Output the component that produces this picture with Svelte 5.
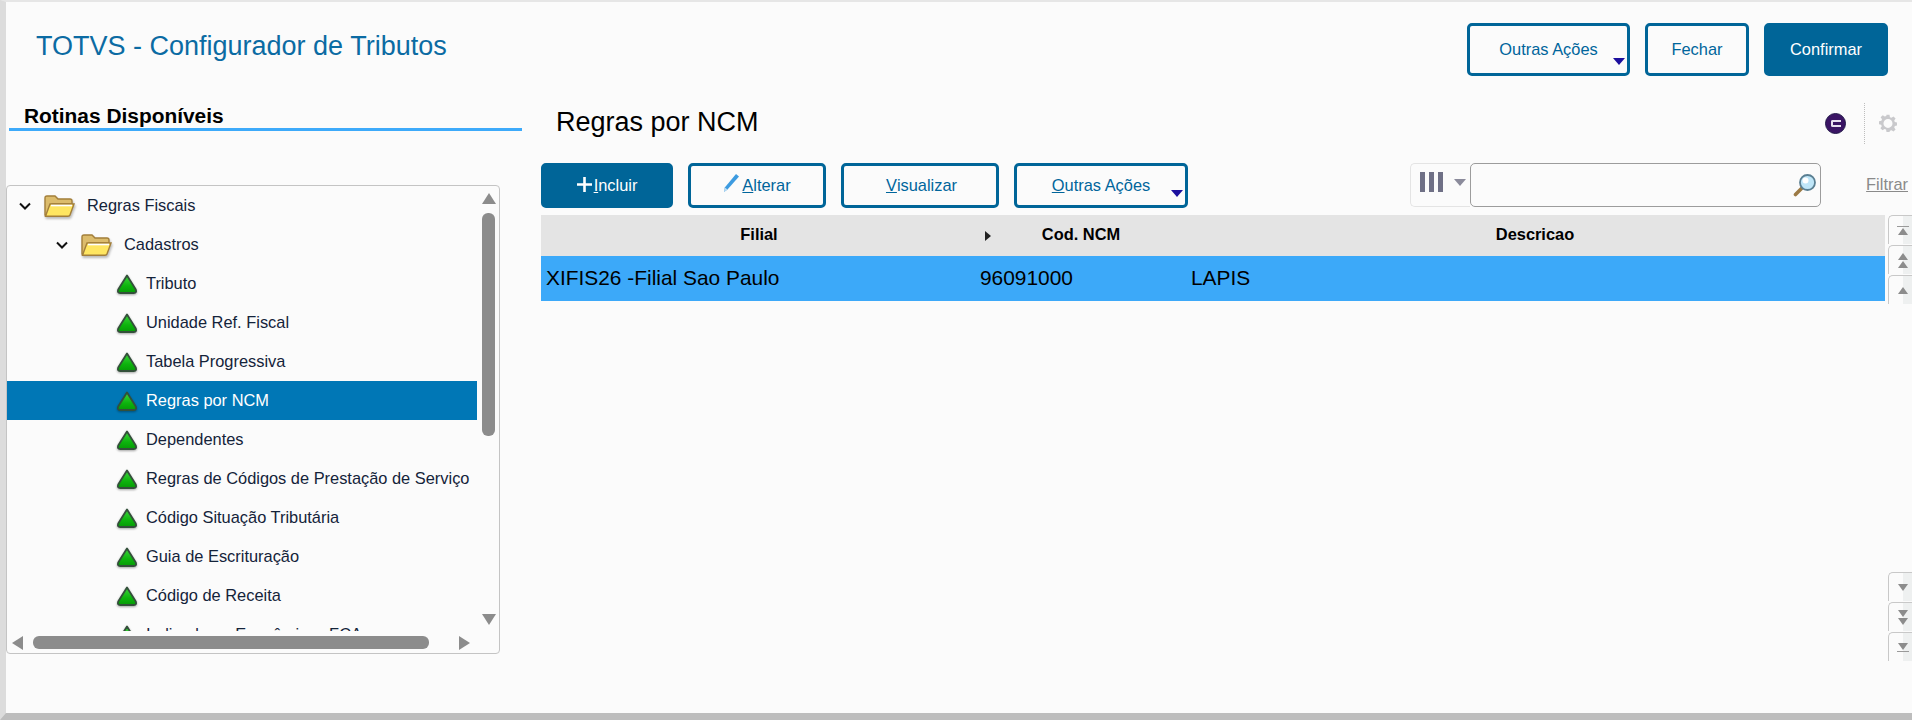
<script>
  const routines = [
    'Tributo',
    'Unidade Ref. Fiscal',
    'Tabela Progressiva',
    'Regras por NCM',
    'Dependentes',
    'Regras de Códigos de Prestação de Serviço',
    'Código Situação Tributária',
    'Guia de Escrituração',
    'Código de Receita',
    'Indicadores Econômicos FCA'
  ];
  const folders = [
    { label: 'Regras Fiscais', cls: 'lvl0' },
    { label: 'Cadastros', cls: 'lvl1' }
  ];
  const selected = 'Regras por NCM';
</script>

<div class="page">
  <header class="topbar">
    <h1>TOTVS - Configurador de Tributos</h1>
    <div class="actions">
      <button class="btn big more">Outras Ações<span class="caret"></span></button>
      <button class="btn big close">Fechar</button>
      <button class="btn big primary confirm">Confirmar</button>
    </div>
  </header>

  <main class="main">
    <aside class="left">
      <h2>Rotinas Disponíveis</h2>
      <div class="tree">
        <svg class="defs" width="0" height="0">
          <defs>
            <linearGradient id="triFill" x1="0" y1="0" x2="0" y2="1">
              <stop offset="0" stop-color="#3fd43f"/>
              <stop offset="0.6" stop-color="#0db40d"/>
              <stop offset="1" stop-color="#069a06"/>
            </linearGradient>
          </defs>
        </svg>
        <div class="tree-list">
          {#each folders as f}
            <div class="row {f.cls}">
              <svg class="chevron" viewBox="0 0 12 8"><path d="M1 1.5 6 6.5 11 1.5" fill="none" stroke="#111" stroke-width="2"/></svg>
              <svg class="folder" viewBox="0 0 32 24">
                <path d="M2 21V4q0-2 2-2h8l3 3h12q2 0 2 2v3H9L5 21z" fill="#dcbc6c" stroke="#a37f3a" stroke-width="1.4"/>
                <path d="M7 10h24l-4 11q-.4 1.200-2 1.200H2.500z" fill="#ffe661" stroke="#a37f3a" stroke-width="1.4"/>
                <path d="M8 11.500h21" stroke="#fff" stroke-width="1.600"/>
              </svg>
              <span>{f.label}</span>
            </div>
          {/each}
          {#each routines as r}
            <div class="row leaf" class:active={r === selected}>
              <svg class="tri" viewBox="0 0 22 22">
                <path d="M11 2.500 19.800 16.500q1.200 3.500-2 3.500H4.200q-3.200 0-2-3.500z" fill="url(#triFill)" stroke="#33503a" stroke-width="1.800" stroke-linejoin="round"/>
              </svg>
              <span>{r}</span>
            </div>
          {/each}
        </div>
        <div class="vbar">
          <span class="arrow up"></span>
          <span class="thumb-v"></span>
          <span class="arrow down"></span>
        </div>
        <div class="hbar">
          <span class="arrow left-a"></span>
          <span class="thumb-h"></span>
          <span class="arrow right-a"></span>
        </div>
      </div>
    </aside>

    <section class="content">
      <div class="head">
        <h3>Regras por NCM</h3>
        <div class="head-icons">
          <span class="badge"><span></span></span>
          <span class="dots"></span>
          <svg class="gear" viewBox="0 0 24 24">
            <path fill="#c9c9cc" fill-rule="evenodd" d="M10 1h4l.6 3.200 2 .8L19.300 3.200l2.800 2.800-1.800 2.700.8 2 3.200.6v4l-3.200.6-.8 2 1.800 2.700-2.800 2.800-2.700-1.800-2 .8L14 24h-4l-.6-3.200-2-.8-2.700 1.800-2.800-2.800 1.800-2.700-.8-2L0 13.700v-4l3.200-.6.8-2L2.200 4.400 5 1.600l2.700 1.800 2-.8zM12 6.500a6 6 0 1 0 0 12 6 6 0 0 0 0-12z"/>
          </svg>
        </div>
      </div>

      <div class="toolbar">
        <button class="btn small primary include">
          <svg class="plus" viewBox="0 0 15 15"><path d="M7.500 0v15M0 7.500h15" stroke="#fff" stroke-width="2.600"/></svg>
          <span><u>I</u>ncluir</span>
        </button>
        <button class="btn small edit">
          <svg class="pencil" viewBox="0 0 16 18"><path d="M13 0l3 2.500L4.500 15.500 1 18l.8-4.500z" fill="#3d9be0"/><path d="M1.800 13.500 1 18l3.500-2.500z" fill="#bcdcf2"/></svg>
          <span><u>A</u>lterar</span>
        </button>
        <button class="btn small view"><u>V</u>isualizar</button>
        <button class="btn small more2"><span><u>O</u>utras Ações</span><span class="caret"></span></button>

        <div class="search-group">
          <div class="cols">
            <span class="bars"><i></i><i></i><i></i></span>
            <span class="cols-caret"></span>
          </div>
          <div class="search">
            <input type="text" />
            <svg class="lens" viewBox="0 0 24 24">
              <path d="M9 15 2.500 21.500" stroke="#9c7a45" stroke-width="3.600" stroke-linecap="round"/>
              <circle cx="14.500" cy="9.500" r="7.500" fill="#bfe6f8" stroke="#5a7f92" stroke-width="1.800"/>
              <circle cx="12.500" cy="7.500" r="3" fill="#fff"/>
            </svg>
          </div>
          <a class="filter" href="#top">Filtrar</a>
        </div>
      </div>

      <div class="grid-wrap">
        <div class="table">
          <div class="thead">
            <div>Filial</div>
            <div class="ncm-head"><span class="mark"></span>Cod. NCM</div>
            <div>Descricao</div>
          </div>
          <div class="tr">
            <div>XIFIS26 -Filial Sao Paulo</div>
            <div>96091000</div>
            <div>LAPIS</div>
          </div>
        </div>
        <div class="pager">
          <div class="pager-group">
            <div class="pg"><span class="bar-line"></span><span class="t-up"></span></div>
            <div class="pg"><span class="t-up"></span><span class="t-up"></span></div>
            <div class="pg"><span class="t-up"></span></div>
          </div>
          <div class="pager-group">
            <div class="pg"><span class="t-down"></span></div>
            <div class="pg"><span class="t-down"></span><span class="t-down"></span></div>
            <div class="pg"><span class="t-down"></span><span class="bar-line"></span></div>
          </div>
        </div>
      </div>
    </section>
  </main>
</div>

<style>
  :global(body) {
    margin: 0;
    font-family: "Liberation Sans", Arial, sans-serif;
  }

  .page {
    box-sizing: border-box;
    width: 1912px;
    height: 720px;
    background: #fbfbfb;
    border-top: 2px solid #e6e6e6;
    border-left: 6px solid #dcdcdc;
    border-bottom: 7px solid #bdbdbd;
    display: flex;
    flex-direction: column;
    overflow: hidden;
  }

  .topbar {
    height: 82px;
    flex: none;
    box-sizing: border-box;
    padding: 21px 24px 0 30px;
    display: flex;
    justify-content: space-between;
    align-items: flex-start;
  }

  h1 {
    margin: 8px 0 0;
    font-size: 27px;
    line-height: 30px;
    font-weight: 400;
    color: #0b6ba3;
  }

  .actions {
    display: flex;
    gap: 15px;
  }

  .btn {
    box-sizing: border-box;
    position: relative;
    border: 3px solid #006598;
    border-radius: 5px;
    background: #fbfbfb;
    color: #00659b;
    font-family: inherit;
    font-size: 16.4px;
    padding: 0;
    display: flex;
    align-items: center;
    justify-content: center;
  }

  .btn.primary {
    background: #006598;
    color: #fff;
  }

  .big {
    height: 53px;
  }

  .more {
    width: 163px;
  }
  .close {
    width: 104px;
  }
  .confirm {
    width: 124px;
  }

  .caret {
    position: absolute;
    right: 2px;
    bottom: 8px;
    border-left: 6px solid transparent;
    border-right: 6px solid transparent;
    border-top: 7px solid #1c0f9e;
  }

  .main {
    flex: 1;
    display: flex;
    min-height: 0;
  }

  .left {
    width: 535px;
    flex: none;
  }

  h2 {
    box-sizing: border-box;
    margin: 20px 0 0 3px;
    width: 513px;
    height: 27px;
    padding-left: 15px;
    font-size: 20.9px;
    line-height: 24px;
    font-weight: 700;
    color: #000;
    border-bottom: 3px solid #3daafa;
  }

  .tree {
    box-sizing: border-box;
    margin: 54px 0 0;
    width: 494px;
    height: 469px;
    border: 1px solid #c4c4c4;
    border-radius: 4px;
    display: grid;
    grid-template-columns: 470px 1fr;
    grid-template-rows: 445px 1fr;
  }

  .defs {
    position: absolute;
  }

  .tree-list {
    grid-column: 1;
    grid-row: 1;
    overflow: hidden;
    white-space: nowrap;
  }

  .row {
    height: 39px;
    display: flex;
    align-items: center;
    font-size: 16.4px;
    color: #14233a;
  }

  .lvl0 {
    padding-left: 12px;
  }
  .lvl1 {
    padding-left: 49px;
  }

  .chevron {
    width: 12px;
    height: 8px;
    margin-right: 12px;
  }

  .folder {
    width: 32px;
    height: 24px;
    margin-right: 12px;
    filter: drop-shadow(1px 2px 1px rgba(0, 0, 0, 0.25));
  }

  .leaf {
    padding-left: 109px;
  }

  .tri {
    width: 22px;
    height: 22px;
    margin-right: 8px;
    filter: drop-shadow(0 1px 1px rgba(0, 0, 0, 0.35));
  }

  .active {
    background: #0077b6;
    color: #fff;
  }

  .vbar {
    grid-column: 2;
    grid-row: 1 / 3;
    padding: 7px 0 28px 5px;
    display: flex;
    flex-direction: column;
    align-items: flex-start;
  }

  .arrow {
    display: block;
    width: 0;
    height: 0;
  }

  .up {
    border-left: 7px solid transparent;
    border-right: 7px solid transparent;
    border-bottom: 11px solid #8c8c8c;
  }

  .down {
    margin-top: auto;
    border-left: 7px solid transparent;
    border-right: 7px solid transparent;
    border-top: 11px solid #8c8c8c;
  }

  .thumb-v {
    margin-top: 9px;
    width: 13px;
    height: 223px;
    border-radius: 6px;
    background: #8c8c8c;
  }

  .hbar {
    grid-column: 1;
    grid-row: 2;
    padding: 5px 0 0 5px;
    display: flex;
    align-items: flex-start;
  }

  .left-a {
    border-top: 7px solid transparent;
    border-bottom: 7px solid transparent;
    border-right: 11px solid #8c8c8c;
  }

  .thumb-h {
    margin-left: 10px;
    width: 396px;
    height: 13px;
    border-radius: 6px;
    background: #8c8c8c;
  }

  .right-a {
    margin-left: 30px;
    border-top: 7px solid transparent;
    border-bottom: 7px solid transparent;
    border-left: 11px solid #8c8c8c;
  }

  .content {
    flex: 1;
    min-width: 0;
  }

  .head {
    height: 79px;
    box-sizing: border-box;
    padding: 0 15px 3px 15px;
    display: flex;
    justify-content: space-between;
    align-items: center;
  }

  h3 {
    margin: 0;
    font-size: 27px;
    font-weight: 400;
    color: #000;
  }

  .head-icons {
    display: flex;
    align-items: center;
    margin-top: 2px;
  }

  .badge {
    box-sizing: border-box;
    width: 21px;
    height: 21px;
    border-radius: 50%;
    background: #3a1464;
    border: 1px solid #241a4a;
    display: flex;
    align-items: center;
    justify-content: center;
  }

  .badge span {
    box-sizing: border-box;
    width: 10px;
    height: 7px;
    border: 2px solid #e8e0f0;
    border-right: none;
    border-radius: 2px 0 0 2px;
  }

  .dots {
    margin-left: 18px;
    height: 41px;
    border-left: 1px dotted #bdbdbd;
  }

  .gear {
    margin-left: 14px;
    width: 18px;
    height: 18px;
  }

  .toolbar {
    height: 45px;
    display: flex;
    gap: 15px;
  }

  .small {
    height: 45px;
  }

  .include {
    width: 132px;
    gap: 2px;
  }

  .plus {
    width: 15px;
    height: 15px;
    margin-top: -3px;
  }

  .edit {
    width: 138px;
    gap: 3px;
  }

  .pencil {
    width: 16px;
    height: 18px;
    margin-top: -5px;
  }

  .view {
    width: 158px;
    padding-left: 3px;
  }

  .more2 {
    width: 174px;
  }

  .search-group {
    margin-left: auto;
    padding-right: 4px;
    display: flex;
    align-items: flex-start;
  }

  .cols {
    box-sizing: border-box;
    width: 60px;
    height: 44px;
    border: 1px solid #e4e4e4;
    border-right: none;
    border-radius: 5px 0 0 5px;
    padding: 8px 0 0 9px;
    display: flex;
    gap: 11px;
  }

  .bars {
    display: flex;
    gap: 4px;
    height: 20px;
  }

  .bars i {
    display: block;
    width: 5px;
    background: #6f7086;
  }

  .cols-caret {
    margin-top: 7px;
    width: 0;
    height: 0;
    border-left: 6px solid transparent;
    border-right: 6px solid transparent;
    border-top: 7px solid #8b8b9b;
  }

  .search {
    position: relative;
  }

  .search input {
    box-sizing: border-box;
    display: block;
    width: 351px;
    height: 44px;
    border: 1px solid #9c9c9c;
    border-radius: 5px;
    background: #fbfbfb;
    padding: 0 36px 0 6px;
  }

  .lens {
    position: absolute;
    right: 4px;
    top: 10px;
    width: 24px;
    height: 24px;
  }

  .filter {
    margin: 12px 0 0 45px;
    font-size: 16.4px;
    color: #8a8a8a;
  }

  .grid-wrap {
    margin-top: 7px;
    height: 446px;
    display: flex;
  }

  .table {
    width: 1344px;
    flex: none;
  }

  .thead,
  .tr {
    display: grid;
    grid-template-columns: 436px 208px 700px;
    color: #000;
  }

  .thead {
    height: 41px;
    background: #e4e4e4;
    font-size: 16.4px;
    font-weight: 700;
    text-align: center;
    line-height: 39px;
  }

  .ncm-head {
    position: relative;
  }

  .mark {
    position: absolute;
    left: 8px;
    top: 16px;
    border-top: 5px solid transparent;
    border-bottom: 5px solid transparent;
    border-left: 6px solid #222;
  }

  .tr {
    height: 45px;
    background: #3ca9f9;
    font-size: 20.9px;
    line-height: 44px;
  }

  .tr div:nth-child(1) {
    padding-left: 5px;
  }
  .tr div:nth-child(2) {
    padding-left: 3px;
  }
  .tr div:nth-child(3) {
    padding-left: 6px;
  }

  .pager {
    margin-left: 3px;
    flex: 1;
    display: flex;
    flex-direction: column;
    justify-content: space-between;
  }

  .pager-group {
    display: flex;
    flex-direction: column;
    gap: 1px;
  }

  .pg {
    box-sizing: border-box;
    height: 29px;
    border: 1px solid #c8c8c8;
    border-width: 1px 0 0 1px;
    border-radius: 5px 0 0 0;
    background: linear-gradient(90deg, #fbfbfb 62%, #eef0f0 62%);
    padding-left: 9px;
    display: flex;
    flex-direction: column;
    justify-content: center;
    gap: 1px;
  }

  .t-up,
  .t-down {
    display: block;
    width: 0;
    height: 0;
    border-left: 5px solid transparent;
    border-right: 5px solid transparent;
  }

  .t-up {
    border-bottom: 7px solid #8c8c8c;
  }

  .t-down {
    border-top: 7px solid #8c8c8c;
  }

  .bar-line {
    display: block;
    width: 12px;
    margin-left: -1px;
    height: 1px;
    background: #9a9a9a;
  }
</style>
